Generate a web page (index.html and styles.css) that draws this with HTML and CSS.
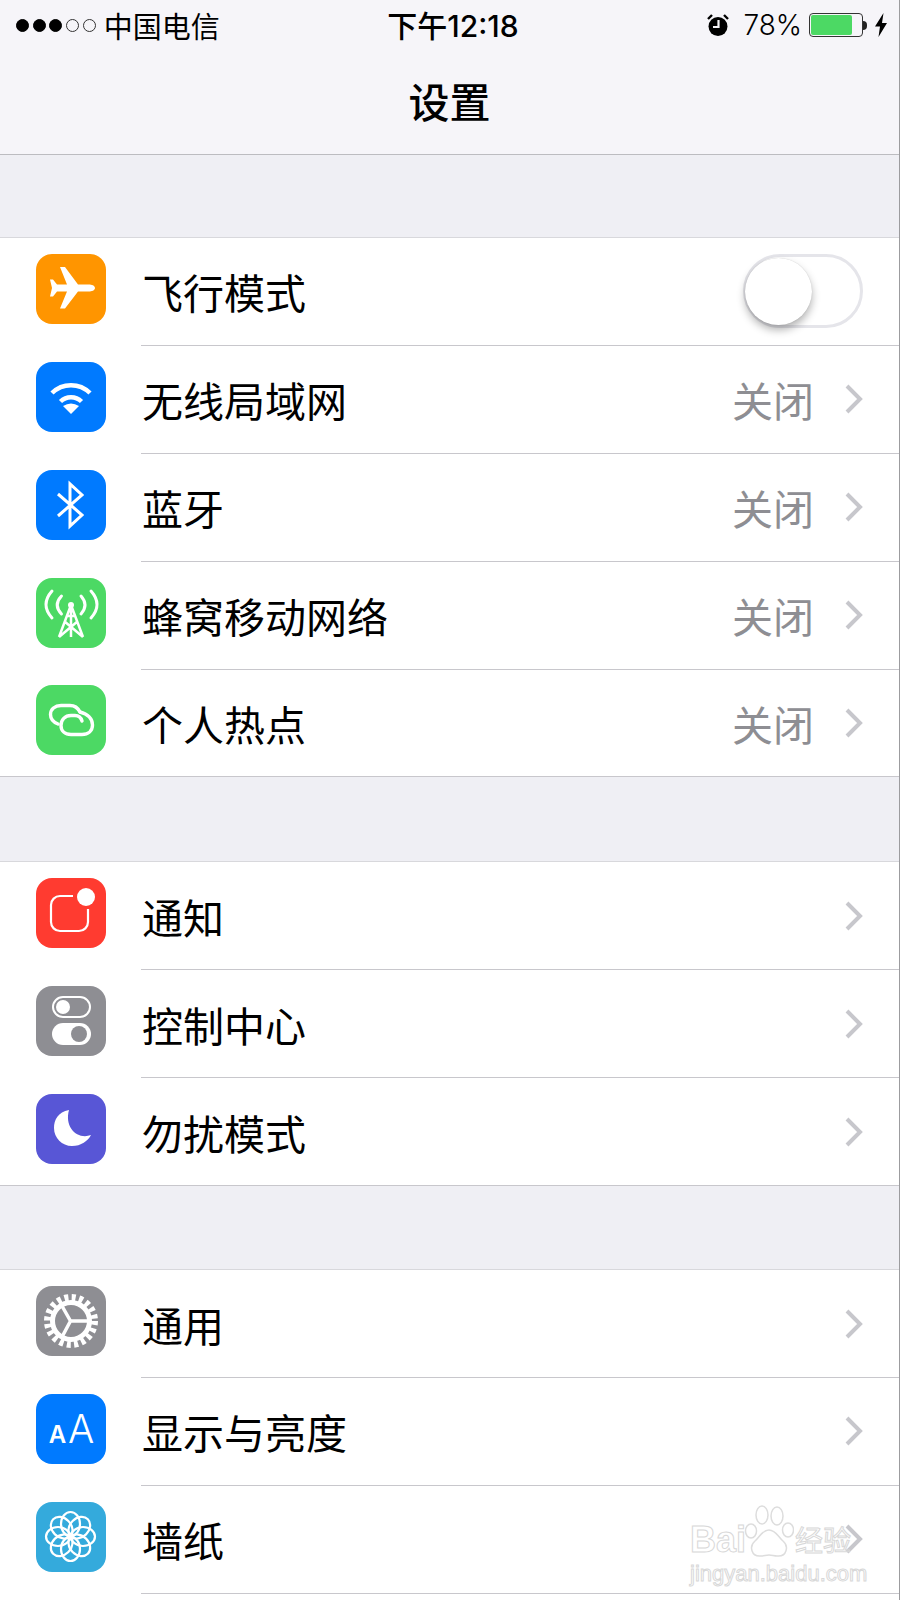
FILE: index.html
```html
<!DOCTYPE html>
<html lang="zh-CN">
<head>
  <meta charset="UTF-8">
  <meta name="viewport" content="width=device-width, initial-scale=1.0">
  <title>设置</title>
  <link rel="stylesheet" href="styles.css">
</head>
<body>
  <div class="phone">
    <div class="status">
      <div class="status-left">
        <span class="signal"><i class="on"></i><i class="on"></i><i class="on"></i><i></i><i></i></span>
        <span>中国电信</span>
      </div>
      <div class="status-time">下午12:18</div>
      <div class="status-right">
        <svg class="alarm" viewBox="0 0 24 24" width="24" height="24">
          <circle cx="12" cy="13.5" r="9.5" fill="#000"/>
          <path d="M2 6l4-4M22 6l-4-4" stroke="#000" stroke-width="2.4" fill="none"/>
          <path d="M12.5 7v7H7" stroke="#f6f5f9" stroke-width="2.2" fill="none"/>
        </svg>
        <span class="percent">78%</span>
        <span class="battery"><span class="battery-fill"></span></span>
        <span class="battery-nub"></span>
        <svg class="bolt" viewBox="0 0 12 24" width="12" height="24">
          <path d="M8.5 0L0 13.5h5L3.5 24 12 10H7z" fill="#000"/>
        </svg>
      </div>
    </div>
    <div class="nav">设置</div>

    <div class="group">
      <div class="row">
        <span class="icon orange">
          <svg viewBox="0 0 70 70"><path d="M59 34c0-2.500-3.500-3.500-6-3.500H42L29 13h-5l7 17.500H21l-4-5h-3l2 8.500-2 8.500h3l4-5h10l-7 17h5l13-17h11c2.500 0 6-1 6-3.500z" fill="#fff"/></svg>
        </span>
        <div class="row-body">
          <span class="label">飞行模式</span>
          <span class="switch"><span class="knob"></span></span>
        </div>
      </div>
      <div class="row">
        <span class="icon blue">
          <svg viewBox="0 0 70 70" fill="none" stroke="#fff" stroke-width="4.500">
            <path d="M16 31a27 27 0 0 1 38 0"/>
            <path d="M24.500 39.500a15 15 0 0 1 21 0"/>
            <path d="M35 52l-8-8q8-5 16 0z" fill="#fff" stroke="none"/>
          </svg>
        </span>
        <div class="row-body">
          <span class="label">无线局域网</span>
          <span class="value">关闭</span>
          <svg class="chevron" viewBox="0 0 18 30"><path d="M2 2l13 13L2 28"/></svg>
        </div>
      </div>
      <div class="row">
        <span class="icon blue">
          <svg viewBox="0 0 70 70" fill="none" stroke="#fff" stroke-width="3">
            <path d="M22 24l24 21-12 11V14l12 11-24 21"/>
          </svg>
        </span>
        <div class="row-body">
          <span class="label">蓝牙</span>
          <span class="value">关闭</span>
          <svg class="chevron" viewBox="0 0 18 30"><path d="M2 2l13 13L2 28"/></svg>
        </div>
      </div>
      <div class="row">
        <span class="icon green">
          <svg viewBox="0 0 70 70" fill="none" stroke="#fff" stroke-width="2.500">
            <path d="M16 13Q4 26.500 16 40M25.500 18Q17 27 25.500 36M55 13Q67 26.500 55 40M45 18Q53 27 45 36" stroke-width="3" stroke-linecap="round"/>
            <path d="M35 27L23 59M35 27l12 32M35 27v32M28 43l19 16M42 43L23 59M31 38h8"/>
            <circle cx="35" cy="27" r="3" fill="#fff" stroke="none"/>
          </svg>
        </span>
        <div class="row-body">
          <span class="label">蜂窝移动网络</span>
          <span class="value">关闭</span>
          <svg class="chevron" viewBox="0 0 18 30"><path d="M2 2l13 13L2 28"/></svg>
        </div>
      </div>
      <div class="row">
        <span class="icon green">
          <svg viewBox="0 0 70 70" fill="none" stroke="#fff" stroke-width="3.400" stroke-linecap="round">
            <path d="M22 39C17 37 14.500 33.500 14.500 29.500 14.500 24 19 20.500 25 20.500h9c5 0 8 2.500 10 6.500"/>
            <path d="M44 27C52 29 56.500 34 56.500 40 56.500 46 52 49.500 46 49.500H35C29 49.500 25 46 25 40.500 25 35 29 30.500 35 30.500h4c3 0 6 2 7 5.500"/>
          </svg>
        </span>
        <div class="row-body">
          <span class="label">个人热点</span>
          <span class="value">关闭</span>
          <svg class="chevron" viewBox="0 0 18 30"><path d="M2 2l13 13L2 28"/></svg>
        </div>
      </div>
    </div>

    <div class="group">
      <div class="row">
        <span class="icon red">
          <svg viewBox="0 0 70 70" fill="none" stroke="#fff" stroke-width="2.200">
            <path d="M37 18H24a9 9 0 0 0-9 9v17a9 9 0 0 0 9 9h19a9 9 0 0 0 9-9V31"/>
            <circle cx="50" cy="19" r="9" fill="#fff" stroke="none"/>
          </svg>
        </span>
        <div class="row-body">
          <span class="label">通知</span>
          <svg class="chevron" viewBox="0 0 18 30"><path d="M2 2l13 13L2 28"/></svg>
        </div>
      </div>
      <div class="row">
        <span class="icon gray">
          <svg viewBox="0 0 70 70">
            <rect x="17" y="11" width="37" height="20" rx="10" fill="none" stroke="#fff" stroke-width="2"/>
            <circle cx="27" cy="21" r="7" fill="#fff"/>
            <rect x="16" y="37" width="39" height="22" rx="11" fill="#fff"/>
            <circle cx="43" cy="48" r="8" fill="#8e8e93"/>
          </svg>
        </span>
        <div class="row-body">
          <span class="label">控制中心</span>
          <svg class="chevron" viewBox="0 0 18 30"><path d="M2 2l13 13L2 28"/></svg>
        </div>
      </div>
      <div class="row">
        <span class="icon purple">
          <svg viewBox="0 0 70 70"><path d="M33 16C22 18 18 26 18 34c0 10 8 18 18 18 9 0 16-5 19-11-13 5-27-7-22-25z" fill="#fff"/></svg>
        </span>
        <div class="row-body">
          <span class="label">勿扰模式</span>
          <svg class="chevron" viewBox="0 0 18 30"><path d="M2 2l13 13L2 28"/></svg>
        </div>
      </div>
    </div>

    <div class="group">
      <div class="row">
        <span class="icon gray">
          <svg viewBox="0 0 70 70" fill="none" stroke="#fff">
            <circle cx="35" cy="35" r="23.500" stroke-width="7" stroke-dasharray="4 3.383"/>
            <circle cx="35" cy="35" r="18.500" stroke-width="5"/>
            <path d="M34.500 35L26 20M34.500 35H55M34.500 35L26.500 50" stroke-width="3.500"/>
          </svg>
        </span>
        <div class="row-body">
          <span class="label">通用</span>
          <svg class="chevron" viewBox="0 0 18 30"><path d="M2 2l13 13L2 28"/></svg>
        </div>
      </div>
      <div class="row">
        <span class="icon blue text-icon"><span class="small-a">A</span><span class="big-a">A</span></span>
        <div class="row-body">
          <span class="label">显示与亮度</span>
          <svg class="chevron" viewBox="0 0 18 30"><path d="M2 2l13 13L2 28"/></svg>
        </div>
      </div>
      <div class="row">
        <span class="icon sky">
          <svg viewBox="0 0 70 70" fill="none" stroke="#fff" stroke-width="2.200">
            <ellipse cx="34.500" cy="22" rx="9.500" ry="12"/>
            <ellipse cx="34.500" cy="22" rx="9.500" ry="12" transform="rotate(45 34.500 34.500)"/>
            <ellipse cx="34.500" cy="22" rx="9.500" ry="12" transform="rotate(90 34.500 34.500)"/>
            <ellipse cx="34.500" cy="22" rx="9.500" ry="12" transform="rotate(135 34.500 34.500)"/>
            <ellipse cx="34.500" cy="22" rx="9.500" ry="12" transform="rotate(180 34.500 34.500)"/>
            <ellipse cx="34.500" cy="22" rx="9.500" ry="12" transform="rotate(225 34.500 34.500)"/>
            <ellipse cx="34.500" cy="22" rx="9.500" ry="12" transform="rotate(270 34.500 34.500)"/>
            <ellipse cx="34.500" cy="22" rx="9.500" ry="12" transform="rotate(315 34.500 34.500)"/>
            <circle cx="34.500" cy="34.500" r="4" fill="#fff" stroke="none"/>
          </svg>
        </span>
        <div class="row-body">
          <span class="label">墙纸</span>
          <svg class="chevron" viewBox="0 0 18 30"><path d="M2 2l13 13L2 28"/></svg>
        </div>
      </div>
      <div class="row"></div>
    </div>

    <!-- watermark sits over the last row -->
    <div class="watermark">
      <div class="wm-top">
        <span class="wm-bai">Bai</span>
        <svg class="wm-paw" viewBox="0 0 50 56" width="50" height="56" fill="#fff" stroke="#ddd" stroke-width="1.500">
          <ellipse cx="7" cy="27" rx="5.500" ry="7"/>
          <ellipse cx="18" cy="11" rx="6" ry="9"/>
          <ellipse cx="33" cy="12" rx="6" ry="9"/>
          <ellipse cx="44" cy="26" rx="5.500" ry="7"/>
          <path d="M25 26c-7 0-9 7-14 11-6 5-4 16 6 15 3 0 5-1 8-1s5 1 8 1c10 1 12-10 6-15-5-4-7-11-14-11z"/>
        </svg>
        <span class="wm-cn">经验</span>
      </div>
      <div class="wm-url">jingyan.baidu.com</div>
    </div>
  </div>
</body>
</html>
```

FILE: styles.css
```css
* { box-sizing: border-box; }
body { margin: 0; font-family: Inter, "Noto Sans CJK SC", sans-serif; color: #000; }

.phone { position: relative; width: 900px; height: 1600px; overflow: hidden; background: #efeff4; border-right: 1px solid #9c9c9f; }

.status { display: grid; grid-template-columns: 1fr auto 1fr; align-items: center; height: 50px; padding: 0 12px 0 16px; background: #f6f5f9; font-size: 29px; }
.status-left { display: flex; align-items: center; gap: 8px; }
.signal { display: flex; gap: 3.700px; }
.signal i { width: 13px; height: 13px; border: 1px solid #333; border-radius: 50%; }
.signal i.on { background: #000; border-color: #000; }
.status-time { font-size: 30px; font-weight: 500; margin-left: 3px; margin-bottom: 2px; }
.status-right { display: flex; align-items: center; justify-content: flex-end; }
.alarm { margin-right: 13px; }
.percent { margin-right: 7px; font-size: 28px; font-weight: 300; }
.battery { width: 54px; height: 24px; padding: 1px; border: 1px solid #333; border-radius: 4px; }
.battery-fill { display: block; width: 41px; height: 100%; background: #4cd964; border-radius: 2px; }
.battery-nub { width: 4px; height: 9px; margin-right: 8px; background: #222; border-radius: 0 4px 4px 0; }

.nav { display: flex; justify-content: center; align-items: center; height: 105px; padding-bottom: 5px; background: #f6f5f9; border-bottom: 1px solid #bcbcc0; font-size: 41px; font-weight: 500; }

.group { margin-top: 82px; background: #fff; border-top: 1px solid #d8d8dc; }
.group + .group { margin-top: 84px; }
.group + .group + .group { margin-top: 83px; }
.row { display: flex; align-items: center; height: 107.900px; padding-left: 36px; }
.row:last-child { border-bottom: 1px solid #c8c7cc; }
.row-body { flex: 1; display: flex; align-items: center; height: 100%; margin-left: 35px; padding-right: 36px; border-bottom: 1px solid #c8c7cc; }
.row:last-child .row-body { border-bottom: 0; }

.icon { flex: none; width: 70px; height: 70px; margin-bottom: 6px; border-radius: 16px; }
.icon svg { display: block; width: 70px; height: 70px; }
.orange { background: #ff9500; }
.blue { background: #007aff; }
.green { background: #4cd964; }
.red { background: #ff3b30; }
.gray { background: #8e8e93; }
.purple { background: #5856d6; }
.sky { background: #34aadc; }

.text-icon { display: flex; justify-content: center; align-items: baseline; gap: 2px; padding-top: 15px; padding-left: 1px; color: #fff; line-height: 1; }
.small-a { font-size: 24px; font-weight: 600; }
.big-a { font-size: 39px; font-weight: 300; }

.label { flex: 1; font-size: 41px; margin-left: 1px; }
.value { font-size: 41px; color: #8e8e93; margin-right: 31px; }
.chevron { flex: none; width: 18px; height: 30px; fill: none; stroke: #c7c7cc; stroke-width: 4; }

.switch { display: flex; align-items: center; width: 120px; height: 74px; background: #fff; border: 3px solid #e5e5ea; border-radius: 37px; }
.knob { display: block; width: 67px; height: 67px; margin-left: -1px; background: #fff; border-radius: 50%; box-shadow: 0 5px 9px rgba(0, 0, 0, 0.3), 0 0 1px rgba(0, 0, 0, 0.2); }

.watermark { position: absolute; left: 690px; top: 1504px; width: 165px; color: transparent; -webkit-text-stroke: 1px #d8d8d8; }
.wm-top { display: flex; align-items: flex-end; height: 56px; }
.wm-bai { font-family: "Liberation Sans", sans-serif; font-size: 36px; line-height: 40px; font-weight: 700; width: 56px; }
.wm-paw { flex: none; margin-left: -2px; }
.wm-cn { font-size: 28px; line-height: 38px; margin-left: 1px; white-space: nowrap; }
.wm-url { font-family: "Liberation Sans", sans-serif; font-size: 22px; line-height: 28px; white-space: nowrap; }
```
